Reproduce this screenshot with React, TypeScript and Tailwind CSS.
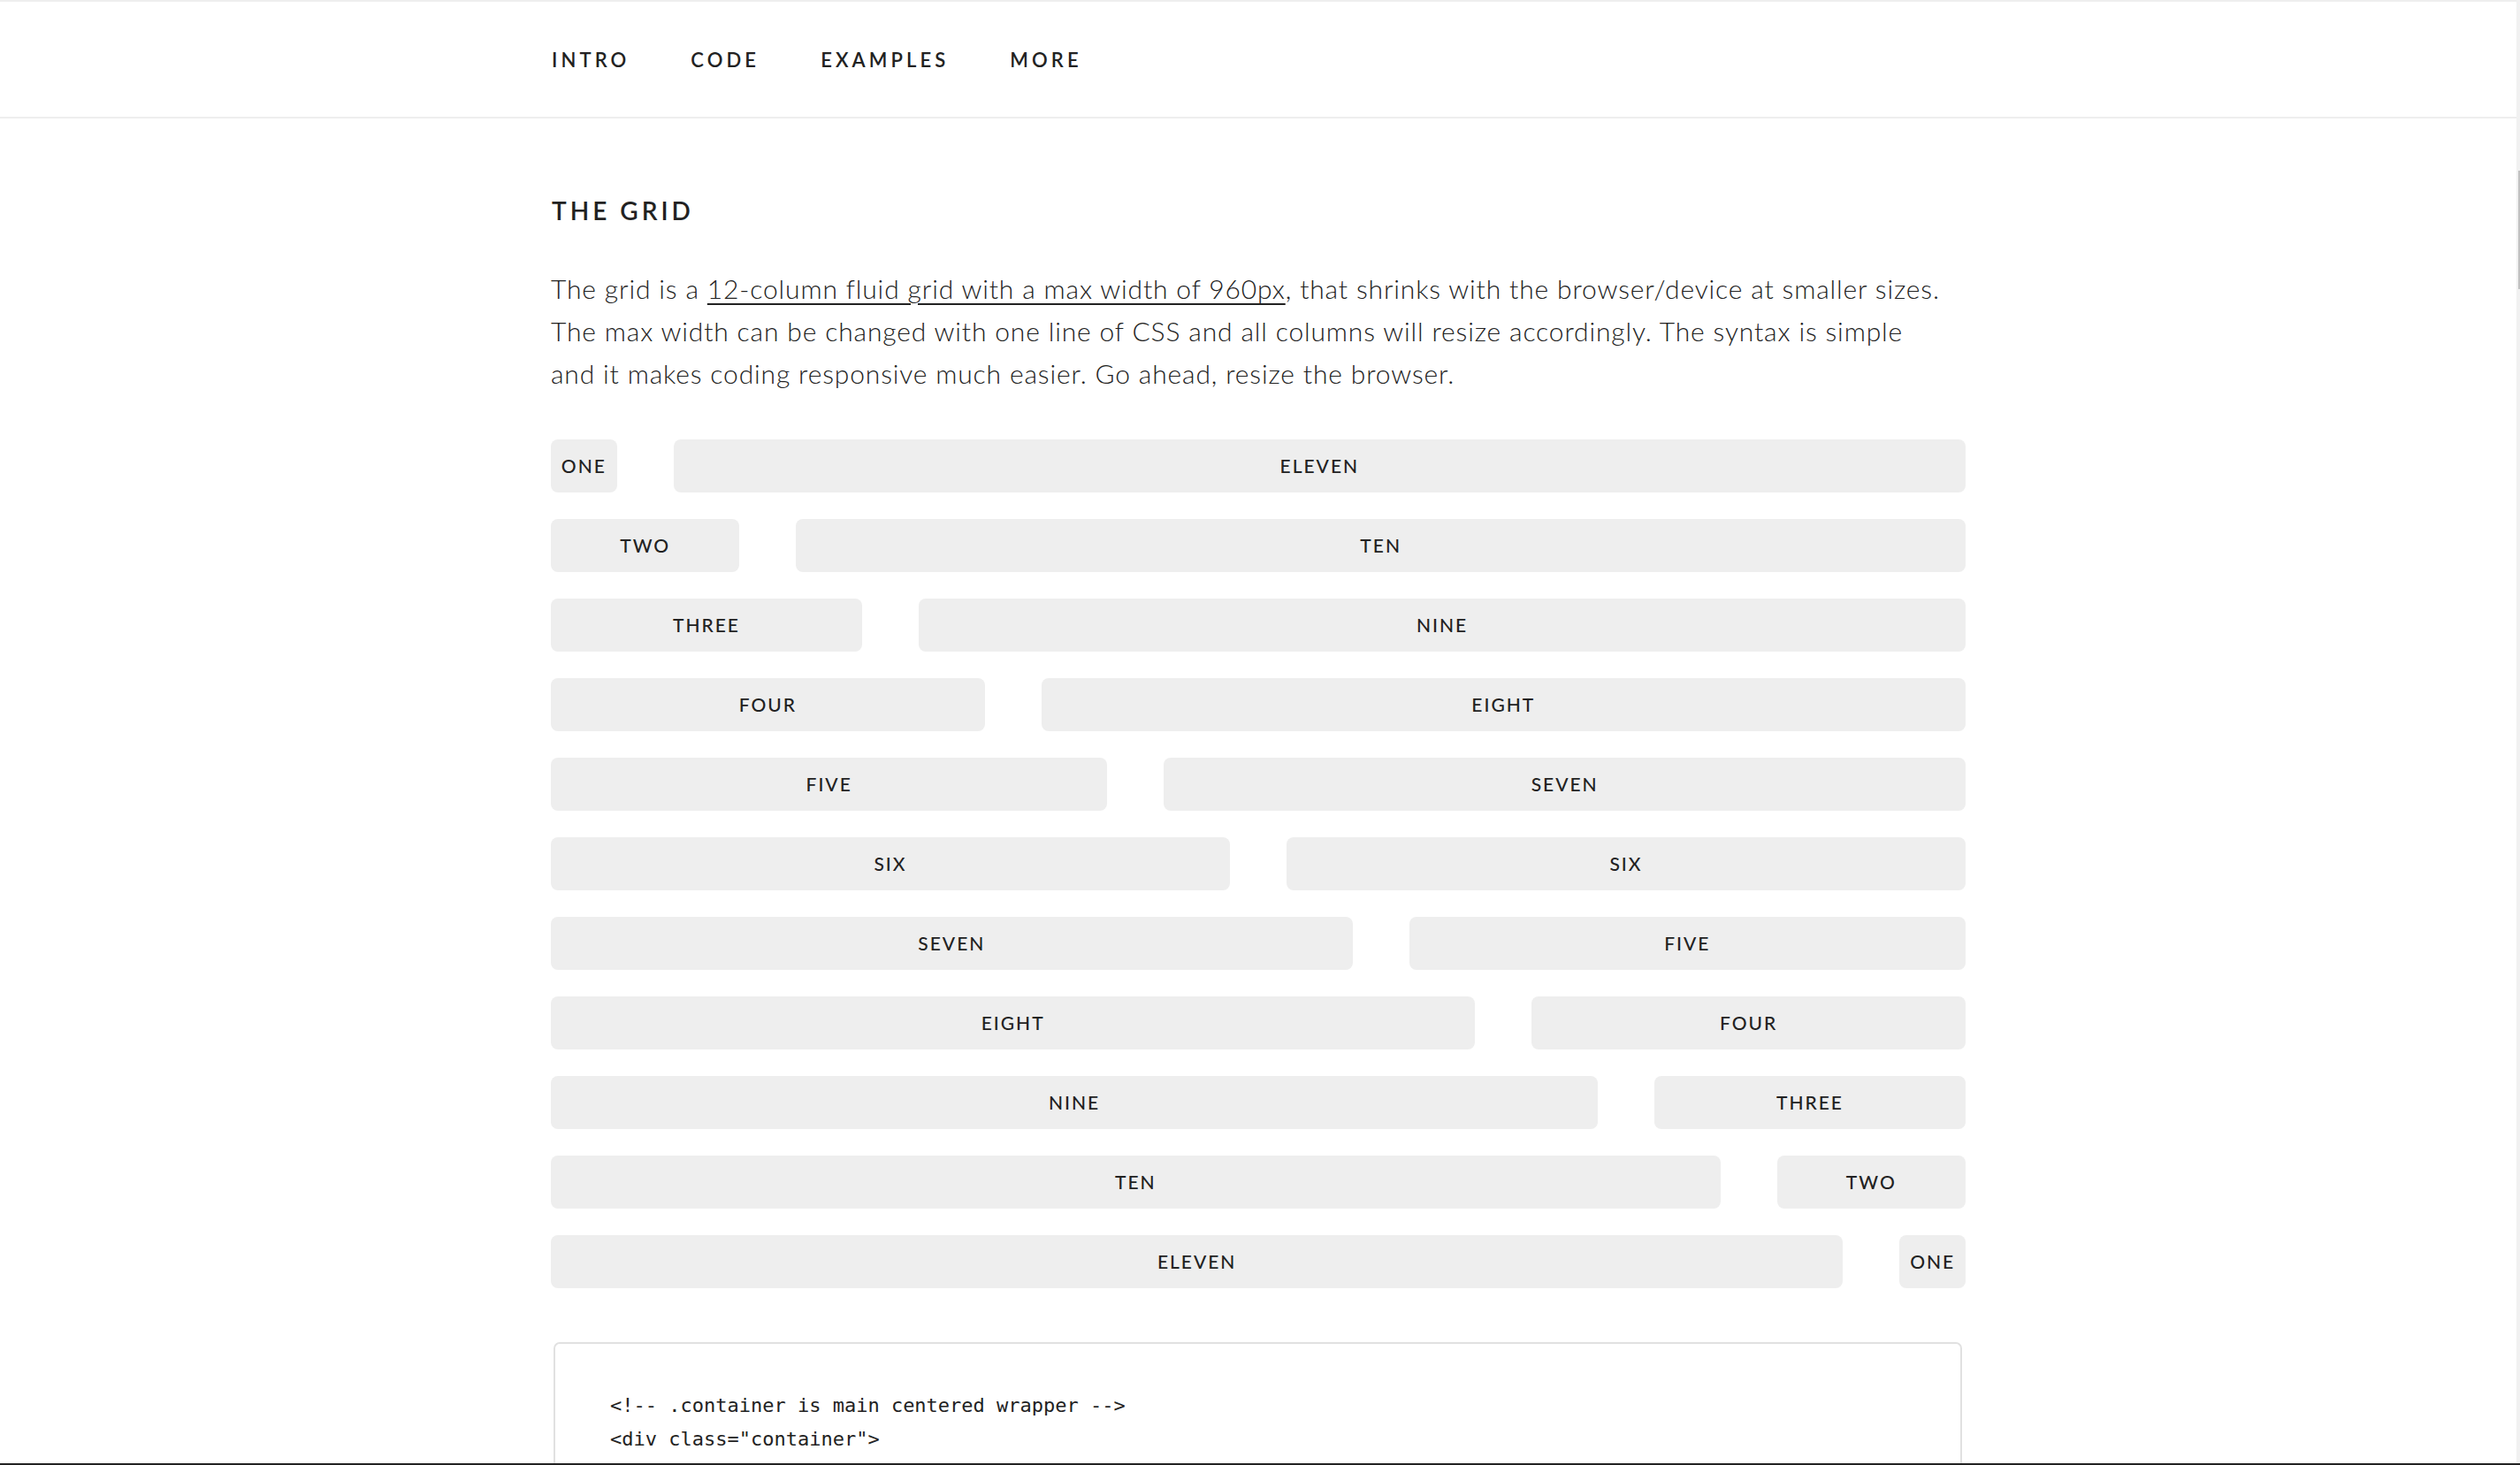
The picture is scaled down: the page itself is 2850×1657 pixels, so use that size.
const names = ['', 'ONE', 'TWO', 'THREE', 'FOUR', 'FIVE', 'SIX', 'SEVEN', 'EIGHT', 'NINE', 'TEN', 'ELEVEN'];
const spans = ['', 'col-span-1', 'col-span-2', 'col-span-3', 'col-span-4', 'col-span-5', 'col-span-6', 'col-span-7', 'col-span-8', 'col-span-9', 'col-span-10', 'col-span-11'];

function Cell({ n }: { n: number }) {
  return (
    <div className={`${spans[n]} flex h-[60px] items-center justify-center rounded-[8px] bg-[#eeeeee]`}>
      <span className="text-[21px] font-medium tracking-[2px] text-[#222]">{names[n]}</span>
    </div>
  );
}

export default function App() {
  const rows: number[] = [1, 2, 3, 4, 5, 6, 7, 8, 9, 10, 11];
  return (
    <div className="flex h-[1657px] w-[2850px] overflow-hidden border-b-2 border-[#222] bg-white font-['Lato',sans-serif] text-[#222]">
      <div className="flex min-w-0 flex-1 flex-col border-t-2 border-[#eeeeee]">
        <nav className="flex h-[132px] shrink-0 items-center border-b-2 border-[#eeeeee]">
          <div className="mx-auto flex w-[1600px] items-center gap-[69px] pl-[1px] text-[22px] font-semibold tracking-[4.1px] text-[#222]">
            <span>INTRO</span>
            <span>CODE</span>
            <span>EXAMPLES</span>
            <span>MORE</span>
          </div>
        </nav>
        <main className="mx-auto w-[1600px] pt-[86px]">
          <h6 className="pl-[1px] text-[28px] font-semibold leading-[36px] tracking-[4px] text-[#222]">THE GRID</h6>
          <p className="mt-[46px] whitespace-nowrap text-[30px] font-light leading-[48px] tracking-[0.85px] text-[#222]">
            The grid is a{' '}
            <a className="underline decoration-[2px] underline-offset-[5px]">12-column fluid grid with a max width of 960px</a>
            , that shrinks with the browser/device at smaller sizes.
            <br />
            The max width can be changed with one line of CSS and all columns will resize accordingly. The syntax is simple
            <br />
            and it makes coding responsive much easier. Go ahead, resize the browser.
          </p>
          <div className="mt-[51px] grid grid-cols-12 gap-x-[64px] gap-y-[30px]">
            {rows.map((a) => (
              <div key={a} className="col-span-12 grid grid-cols-12 gap-x-[64px]">
                <Cell n={a} />
                <Cell n={12 - a} />
              </div>
            ))}
          </div>
          <div className="ml-[3px] mr-[4px] mt-[61px] h-[400px] rounded-[7px] border-2 border-[#e1e1e1] pl-[62px] pt-[51px] font-['DejaVu_Sans_Mono',monospace] text-[22px] leading-[38px] text-[#222]">
            <div className="whitespace-pre">{'<!-- .container is main centered wrapper -->'}</div>
            <div className="whitespace-pre">{'<div class="container">'}</div>
          </div>
        </main>
      </div>
      <div className="w-[4px] shrink-0 bg-[#f1f1f1]">
        <div className="ml-[2px] mt-[193px] h-[134px] w-[2px] bg-[#c1c1c1]" />
      </div>
    </div>
  );
}
